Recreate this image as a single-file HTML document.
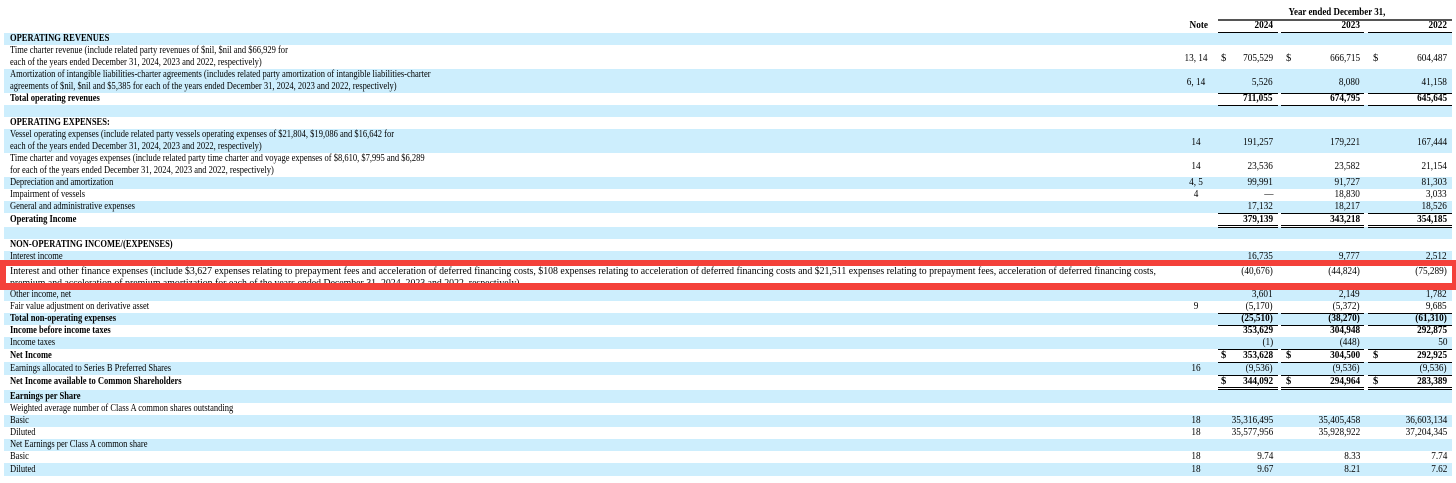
<!DOCTYPE html>
<html><head><meta charset="utf-8"><style>
body{margin:0;width:1456px;height:483px;background:#fff;position:relative;overflow:hidden;font-family:"Liberation Serif",serif;font-size:10.5px;color:#000}
.r{position:absolute;left:4px;width:1448px}
.b{background:#cdeefd}
.t{position:absolute;left:6px;white-space:nowrap;transform:scaleX(.81);transform-origin:left center;line-height:12px}
.n{position:absolute;white-space:nowrap;transform:scaleX(.88);transform-origin:right center;line-height:12px;text-align:right}
.d{position:absolute;white-space:nowrap;line-height:12px}
.bo{font-weight:bold}
.l{position:absolute;height:1px;background:#000}
</style></head><body>
<div class="d bo" style="left:1280px;top:7px;transform:scaleX(.85)">Year ended December 31,</div>
<div class="l" style="left:1218px;width:234px;top:19px;height:2px;background:#555"></div>
<div class="n bo" style="right:248px;top:20px">Note</div>
<div class="n bo" style="right:183px;top:20px">2024</div>
<div class="n bo" style="right:96px;top:20px">2023</div>
<div class="n bo" style="right:9px;top:20px">2022</div>
<div class="l" style="left:1218px;width:60px;top:32px"></div>
<div class="l" style="left:1281px;width:83px;top:32px"></div>
<div class="l" style="left:1368px;width:84px;top:32px"></div>
<div id="rows"></div>
<div style="position:absolute;left:0;top:260px;width:1446px;height:17px;border:6px solid #f4413a;border-bottom-width:7px;pointer-events:none"></div>
<script>
const B='b';
const R=[
[33,12,B,'OPERATING REVENUES',1,'','','','',0],
[45,24,'','Time charter revenue (include related party revenues of $nil, $nil and $66,929 for|each of the years ended December 31, 2024, 2023 and 2022, respectively)',0,'13, 14','705,529','666,715','604,487',1],
[69,24,B,'Amortization of intangible liabilities-charter agreements (includes related party amortization of intangible liabilities-charter|agreements of $nil, $nil and $5,385 for each of the years ended December 31, 2024, 2023 and 2022, respectively)',0,'6, 14','5,526','8,080','41,158',0],
[93,12,'','Total operating revenues',1,'','711,055','674,795','645,645',0],
[105,12,B,'',0,'','','','',0],
[117,12,'','OPERATING EXPENSES:',1,'','','','',0],
[129,24,B,'Vessel operating expenses (include related party vessels operating expenses of $21,804, $19,086 and $16,642 for|each of the years ended December 31, 2024, 2023 and 2022, respectively)',0,'14','191,257','179,221','167,444',0],
[153,24,'','Time charter and voyages expenses (include related party time charter and voyage expenses of $8,610, $7,995 and $6,289|for each of the years ended December 31, 2024, 2023 and 2022, respectively)',0,'14','23,536','23,582','21,154',0],
[177,12,B,'Depreciation and amortization',0,'4, 5','99,991','91,727','81,303',0],
[189,12,'','Impairment of vessels',0,'4','—','18,830','3,033',0],
[201,12,B,'General and administrative expenses',0,'','17,132','18,217','18,526',0],
[213,13,'','Operating Income',1,'','379,139','343,218','354,185',0],
[227,12,B,'',0,'','','','',0],
[239,12,'','NON-OPERATING INCOME/(EXPENSES)',1,'','','','',0],
[251,12,B,'Interest income',0,'','16,735','9,777','2,512',0],
[289,12,B,'Other income, net',0,'','3,601','2,149','1,782',0],
[301,12,'','Fair value adjustment on derivative asset',0,'9','(5,170)','(5,372)','9,685',0],
[313,12,B,'Total non-operating expenses',1,'','(25,510)','(38,270)','(61,310)',0],
[325,12,'','Income before income taxes',1,'','353,629','304,948','292,875',0],
[337,12,B,'Income taxes',0,'','(1)','(448)','50',0],
[349,13,'','Net Income',1,'','353,628','304,500','292,925',1],
[362,13,B,'Earnings allocated to Series B Preferred Shares',0,'16','(9,536)','(9,536)','(9,536)',0],
[375,14,'','Net Income available to Common Shareholders',1,'','344,092','294,964','283,389',1],
[390,13,B,'Earnings per Share',1,'','','','',0],
[403,12,'','Weighted average number of Class A common shares outstanding',0,'','','','',0],
[415,12,B,'Basic',0,'18','35,316,495','35,405,458','36,603,134',0],
[427,12,'','Diluted',0,'18','35,577,956','35,928,922','37,204,345',0],
[439,12,B,'Net Earnings per Class A common share',0,'','','','',0],
[451,12,'','Basic',0,'18','9.74','8.33','7.74',0],
[463,13,B,'Diluted',0,'18','9.67','8.21','7.62',0]
];
let h='';
for(const [t,ht,bg,lab,bold,note,a,b,c,dol] of R){
 const lines=lab.split('|');const cy=t+ht/2-6;const ly=lines.length>1?t:cy;
 h+=`<div class="r ${bg}" style="top:${t}px;height:${ht}px"></div>`;
 lines.forEach((s,i)=>{if(s)h+=`<div class="t${bold?' bo':''}" style="left:10px;top:${ly+i*12}px">${s}</div>`});
 const vy=lines.length>1?t+8:cy;
 if(note)h+=`<div class="d" style="left:1172px;width:48px;text-align:center;top:${vy}px;transform:scaleX(.88)">${note}</div>`;
 [[a,183,1221],[b,96,1286],[c,9,1373]].forEach(([v,r,dx])=>{if(v){h+=`<div class="n${bold?' bo':''}" style="right:${r}px;top:${vy}px">${v}</div>`;if(dol)h+=`<div class="d${bold?' bo':''}" style="left:${dx}px;top:${vy}px">$</div>`;}});
}
h+=`<div class="r" style="top:263px;height:24px;background:#fff"></div>`;
h+=`<div class="t" style="left:10px;top:266px;transform:scaleX(.935)">Interest and other finance expenses (include $3,627 expenses relating to prepayment fees and acceleration of deferred financing costs, $108 expenses relating to acceleration of deferred financing costs and $21,511 expenses relating to prepayment fees, acceleration of deferred financing costs,</div>`;
h+=`<div class="t" style="left:10px;top:278px;transform:scaleX(.935)">premium and acceleration of premium amortization for each of the years ended December 31, 2024, 2023 and 2022, respectively)</div>`;
[['(40,676)',183],['(44,824)',96],['(75,289)',9]].forEach(([v,r])=>h+=`<div class="n" style="right:${r}px;top:266px">${v}</div>`);
const cols=[[1218,60],[1281,83],[1368,84]];
function L(y,dbl){cols.forEach(([x,w])=>{h+=`<div class="l" style="left:${x}px;width:${w}px;top:${y}px"></div>`;if(dbl)h+=`<div class="l" style="left:${x}px;width:${w}px;top:${y+2}px"></div>`;});}
L(93);L(105);L(213);L(225,1);L(313);L(325);L(349);L(362);L(375);L(387,1);
document.getElementById('rows').innerHTML=h;
</script>
</body></html>
